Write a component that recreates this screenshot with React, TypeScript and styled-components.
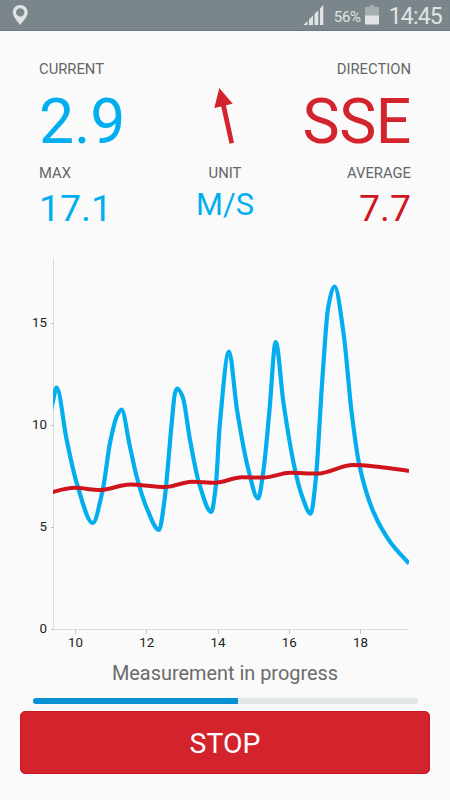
import React from "react";
import styled, { createGlobalStyle } from "styled-components";

const BLUE = "#03aeef";
const RED = "#d3232c";

const GlobalStyle = createGlobalStyle`
  * { box-sizing: border-box; }
  body { margin: 0; background: #fafafa; font-family: Roboto, "Liberation Sans", sans-serif; }
`;

const Screen = styled.div`
  display: flex;
  flex-direction: column;
  width: 450px;
  height: 800px;
  overflow: hidden;
  background: #fafafa;
`;

const StatusBar = styled.header`
  display: flex;
  align-items: center;
  flex: none;
  height: 31px;
  padding: 0 8px 0 12px;
  background: #7a868a;
  border-bottom: 1px solid #697c84;
  color: #e0e4e6;
`;

const StatusRight = styled.div`
  display: flex;
  align-items: center;
  margin-left: auto;
`;

const BatteryLevel = styled.span`
  margin: 3px 4px 0 10px;
  font-size: 15px;
  line-height: 18px;
  letter-spacing: -0.3px;
`;

const Clock = styled.time`
  margin: 3px 0 0 10px;
  font-size: 23px;
  line-height: 28px;
  letter-spacing: -0.8px;
`;

const Readings = styled.section`
  display: grid;
  grid-template-columns: 130px 1fr 130px;
  grid-template-rows: 104px 77px;
  flex: none;
  padding: 29px 39px 0;
`;

const Reading = styled.div<{ $align: "left" | "center" | "right" }>`
  display: flex;
  flex-direction: column;
  text-align: ${(p) => p.$align};
  white-space: nowrap;
`;

const Label = styled.span`
  color: #666;
  font-size: 14.8px;
  line-height: 18px;
`;

const Value = styled.span<{ $tone: string; $size: number; $line: number; $spacing?: number }>`
  color: ${(p) => p.$tone};
  font-size: ${(p) => p.$size}px;
  line-height: ${(p) => p.$line}px;
  letter-spacing: ${(p) => p.$spacing ?? 0}px;
`;

const Compass = styled.div`
  display: flex;
  justify-content: center;
  padding: 26px 2px 0 0;
`;

const Chart = styled.svg`
  display: block;
  flex: none;
  margin-top: 9px;
  font-size: 13.3px;
  fill: #222;
`;

const Status = styled.p`
  flex: none;
  margin: 0;
  height: 38px;
  color: #6b6b6b;
  font-size: 19.9px;
  line-height: 28px;
  text-align: center;
`;

const Track = styled.div`
  flex: none;
  height: 6px;
  margin: 0 32.5px;
  overflow: hidden;
  border-radius: 3px;
  background: #e1e6e6;
`;

const Fill = styled.div`
  height: 100%;
  background: #0490d3;
`;

const StopButton = styled.button`
  flex: none;
  height: 63px;
  margin: 7px 20px 0;
  padding: 1px 0 0;
  border: 1px solid #cf1721;
  border-radius: 5px;
  background: ${RED};
  color: #fff;
  font: 28.4px Roboto, "Liberation Sans", sans-serif;
`;

type Point = [number, number];

const windSpeed: Point[] = [
  [50, 415], [53, 401], [56.6, 387.5], [66.7, 440], [76.7, 483], [92.7, 523],
  [102.7, 490], [110, 443], [116.7, 416.7], [121.5, 409.7], [130, 447],
  [136.7, 476.7], [146.7, 508], [159, 530], [164.5, 500], [172, 420],
  [175, 393], [177.3, 388.5], [182.7, 397], [190, 440], [199, 483],
  [211.3, 512], [215.7, 487], [220, 422], [229, 351.5], [237, 410],
  [248.5, 470], [258, 498.5], [263.5, 470], [269.5, 410], [275.7, 342],
  [283.5, 403], [294, 465], [301.7, 495], [310.7, 513.7], [315.7, 480],
  [322.3, 380], [328.3, 306.7], [334.6, 286.5], [343.5, 333],
  [351.7, 413], [359.3, 465], [373.3, 511.7], [390, 541.7], [409, 563.5],
];

const average: Point[] = [
  [50, 493.5], [53, 492], [75, 487.8], [100, 490], [130, 484.5], [165, 487],
  [192, 481.7], [215, 482.7], [242, 477.3], [264, 477.5], [290, 472.7],
  [317, 473.6], [353, 465], [380, 467], [409, 471],
];

/* Monotone cubic interpolation, flat at each peak and trough. */
function smoothPath(points: Point[]): string {
  const slopes = points.slice(1).map(([x, y], i) => (y - points[i][1]) / (x - points[i][0]));
  const tangents = points.map((_, i) => {
    if (i === 0) return slopes[0];
    if (i === points.length - 1) return slopes[i - 1];
    const a = slopes[i - 1];
    const b = slopes[i];
    return a * b <= 0 ? 0 : (2 * a * b) / (a + b);
  });
  return points.reduce((path, [x, y], i) => {
    if (i === 0) return `M${x},${y}`;
    const [px, py] = points[i - 1];
    const d = (x - px) / 3;
    return `${path}C${px + d},${py + tangents[i - 1] * d} ${x - d},${y - tangents[i] * d} ${x},${y}`;
  }, "");
}

const yTicks = [15, 10, 5, 0].map((value) => ({ value, y: 629 - value * 20.4 }));
const xTicks = [10, 12, 14, 16, 18].map((value, i) => ({ value, x: 75.5 + i * 71.25 }));

function WindChart() {
  return (
    <Chart width="450" height="410" viewBox="0 250 450 410">
      <clipPath id="plot">
        <rect x="53" y="250" width="356" height="380" />
      </clipPath>
      <path d="M53.5 258V629.5H409" fill="none" stroke="#dcdcdc" />
      {yTicks.map(({ value, y }) => (
        <g key={value}>
          <path d={`M51.5 ${Math.round(y) + 0.5}h2`} stroke="#aaa" />
          <text x="47" y={y + 4.4} textAnchor="end">{value}</text>
        </g>
      ))}
      {xTicks.map(({ value, x }) => (
        <g key={value}>
          <path d={`M${Math.floor(x) + 0.5} 630v4`} stroke="#c4c4c4" />
          <text x={x} y="647.4" textAnchor="middle">{value}</text>
        </g>
      ))}
      <g clipPath="url(#plot)" fill="none" strokeLinejoin="round">
        <path d={smoothPath(windSpeed)} stroke={BLUE} strokeWidth="4.2" />
        <path d={smoothPath(average)} stroke="#d0141d" strokeWidth="4" />
      </g>
    </Chart>
  );
}

export default function App() {
  return (
    <>
      <GlobalStyle />
      <Screen>
        <StatusBar>
          <svg width="17" height="22" viewBox="0 0 17 22">
            <path
              fill="currentColor"
              fillRule="evenodd"
              d="M8.2 1C4 1 .8 4.200.8 8.300C.8 12.500 5.300 17.500 8.200 21C11.100 17.500 15.700 12.500 15.700 8.300C15.700 4.200 12.400 1 8.200 1ZM8.200 4.200A4.200 4.200 0 1 1 8.200 12.600A4.200 4.200 0 0 1 8.200 4.200Z"
            />
          </svg>
          <StatusRight>
            <svg width="21" height="22" viewBox="0 0 21 22" fill="currentColor">
              <path d="M.5 21L4.500 17V21ZM6 15.500L10 11.500V21H6ZM11.500 10L15.300 6.200V21H11.500ZM17 4.500L20.300 1V21H17Z" />
            </svg>
            <BatteryLevel>56%</BatteryLevel>
            <svg width="14" height="22" viewBox="0 0 14 22">
              <path fill="#a5adb0" d="M5 1H9.500V3H14V12H0V3H5Z" />
              <path fill="currentColor" d="M0 11.500H14V20.500H0Z" />
            </svg>
            <Clock>14:45</Clock>
          </StatusRight>
        </StatusBar>

        <Readings>
          <Reading $align="left">
            <Label>CURRENT</Label>
            <Value $tone={BLUE} $size={62.5} $line={88} $spacing={-0.2}>2.9</Value>
          </Reading>
          <Compass>
            <svg width="24" height="60" viewBox="0 0 24 60">
              <path fill={RED} d="M7.300 2L20.700 17.700L13.900 19.200L22 56.700L17.500 57.800L9.200 20.500L2.300 22Z" />
            </svg>
          </Compass>
          <Reading $align="right">
            <Label>DIRECTION</Label>
            <Value $tone={RED} $size={62.5} $line={88} $spacing={-0.4}>SSE</Value>
          </Reading>
          <Reading $align="left">
            <Label>MAX</Label>
            <Value $tone={BLUE} $size={37.4} $line={52}>17.1</Value>
          </Reading>
          <Reading $align="center">
            <Label>UNIT</Label>
            <Value $tone={BLUE} $size={30.8} $line={46}>M/S</Value>
          </Reading>
          <Reading $align="right">
            <Label>AVERAGE</Label>
            <Value $tone="#cf171f" $size={37.4} $line={52}>7.7</Value>
          </Reading>
        </Readings>

        <WindChart />

        <Status>Measurement in progress</Status>
        <Track>
          <Fill style={{ width: "53.4%" }} />
        </Track>
        <StopButton>STOP</StopButton>
      </Screen>
    </>
  );
}
